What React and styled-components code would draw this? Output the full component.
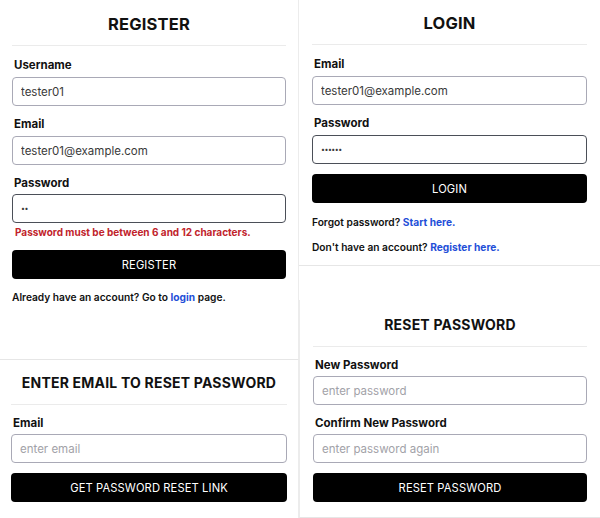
import React from "react";
import styled, { createGlobalStyle } from "styled-components";

const Global = createGlobalStyle`
  html, body { margin: 0; padding: 0; background: #fff; }
  body { font-family: Inter, "Open Sans", sans-serif; color: #111; }
  * { box-sizing: border-box; }
`;

const Page = styled.div`
  width: 600px;
  height: 518px;
  display: grid;
  grid-template-columns: 299px 301px;
  overflow: hidden;
`;

const Column = styled.div`
  display: flex;
  flex-direction: column;
  gap: ${(p) => p.$gap || 0}px;
`;

const Card = styled.section`
  background: #fff;
  padding: ${(p) => p.$pt || 12}px ${(p) => p.$px || 12}px 0;
  height: ${(p) => p.$h}px;
  border-top: ${(p) => (p.$top ? "1px solid #e6e6e6" : "none")};
  border-bottom: ${(p) => (p.$bottom ? "1px solid #e6e6e6" : "none")};
  border-left: ${(p) => (p.$left ? "1px solid #ececec" : "none")};
  border-right: ${(p) => (p.$right ? "1px solid #ececec" : "none")};
`;

const Title = styled.h2`
  margin: 0;
  text-align: center;
  font-size: ${(p) => p.$size || 16.5}px;
  line-height: 22px;
  font-weight: 700;
  color: #111;
  letter-spacing: 0.2px;
`;

const Rule = styled.hr`
  border: none;
  height: 1px;
  background: #ebebeb;
  margin: 10px 0 ${(p) => p.$mb || 11}px;
`;

const Field = styled.div`
  display: flex;
  flex-direction: column;
  gap: ${(p) => p.$gap ?? 4}px;
  margin-bottom: 10px;
`;

const Label = styled.label`
  font-size: 11.5px;
  line-height: 16px;
  font-weight: 700;
  color: #111;
  padding-left: 2px;
`;

const Input = styled.input`
  height: 29px;
  width: 100%;
  border: 1px solid ${(p) => (p.$focus ? "#4b4f58" : "#a9a9b6")};
  border-radius: 4px;
  padding: 0 8px;
  font-family: inherit;
  font-size: ${(p) => (p.$dots ? 7 : 11.5)}px;
  letter-spacing: ${(p) => (p.$dots ? "-0.5px" : "0")};
  color: #3a3a3a;
  background: #fff;
  outline: none;
  &::placeholder { color: #a2a2a8; font-size: 11.5px; }
`;

const ErrorText = styled.div`
  color: #c1232b;
  font-size: 10px;
  font-weight: 700;
  line-height: 14px;
  margin: -8px 0 11px 3px;
`;

const Button = styled.button`
  display: block;
  width: 100%;
  height: 29px;
  background: #000;
  color: #fff;
  border: none;
  border-radius: 4px;
  font-family: inherit;
  font-size: 11.2px;
  font-weight: 400;
  letter-spacing: 0.1px;
`;

const Note = styled.p`
  margin: ${(p) => p.$mt || 11}px 0 0;
  font-size: 10.2px;
  line-height: 14px;
  font-weight: 600;
  color: #111;
`;

const Link = styled.a`
  color: #1f4fd8;
  font-weight: 700;
  text-decoration: none;
`;

export default function App() {
  return (
    <>
      <Global />
      <Page>
        <Column>
          <Card $h={359} $right $pt={13}>
            <Title>REGISTER</Title>
            <Rule />
            <Field>
              <Label>Username</Label>
              <Input defaultValue="tester01" />
            </Field>
            <Field>
              <Label>Email</Label>
              <Input defaultValue="tester01@example.com" />
            </Field>
            <Field $gap={3}>
              <Label>Password</Label>
              <Input $focus $dots type="password" defaultValue="ab" />
            </Field>
            <ErrorText>Password must be between 6 and 12 characters.</ErrorText>
            <Button>REGISTER</Button>
            <Note $mt={11}>
              Already have an account? Go to <Link href="#">login</Link> page.
            </Note>
          </Card>
          <Card $h={159} $top $right $px={11} $pt={12}>
            <Title $size={14}>ENTER EMAIL TO RESET PASSWORD</Title>
            <Rule $mb={10} />
            <Field $gap={3}>
              <Label>Email</Label>
              <Input placeholder="enter email" />
            </Field>
            <Button>GET PASSWORD RESET LINK</Button>
          </Card>
        </Column>
        <Column $gap={34}>
          <Card $h={266} $bottom $px={13}>
            <Title>LOGIN</Title>
            <Rule />
            <Field>
              <Label>Email</Label>
              <Input defaultValue="tester01@example.com" />
            </Field>
            <Field>
              <Label>Password</Label>
              <Input $focus $dots type="password" defaultValue="abcdef" />
            </Field>
            <Button>LOGIN</Button>
            <Note $mt={12}>
              Forgot password? <Link href="#">Start here.</Link>
            </Note>
            <Note $mt={11}>
              Don't have an account? <Link href="#">Register here.</Link>
            </Note>
          </Card>
          <Card $h={218} $left $bottom $pt={14} $px={13}>
            <Title $size={14}>RESET PASSWORD</Title>
            <Rule $mb={10} />
            <Field $gap={3}>
              <Label>New Password</Label>
              <Input placeholder="enter password" />
            </Field>
            <Field $gap={3}>
              <Label>Confirm New Password</Label>
              <Input placeholder="enter password again" />
            </Field>
            <Button>RESET PASSWORD</Button>
          </Card>
        </Column>
      </Page>
    </>
  );
}
